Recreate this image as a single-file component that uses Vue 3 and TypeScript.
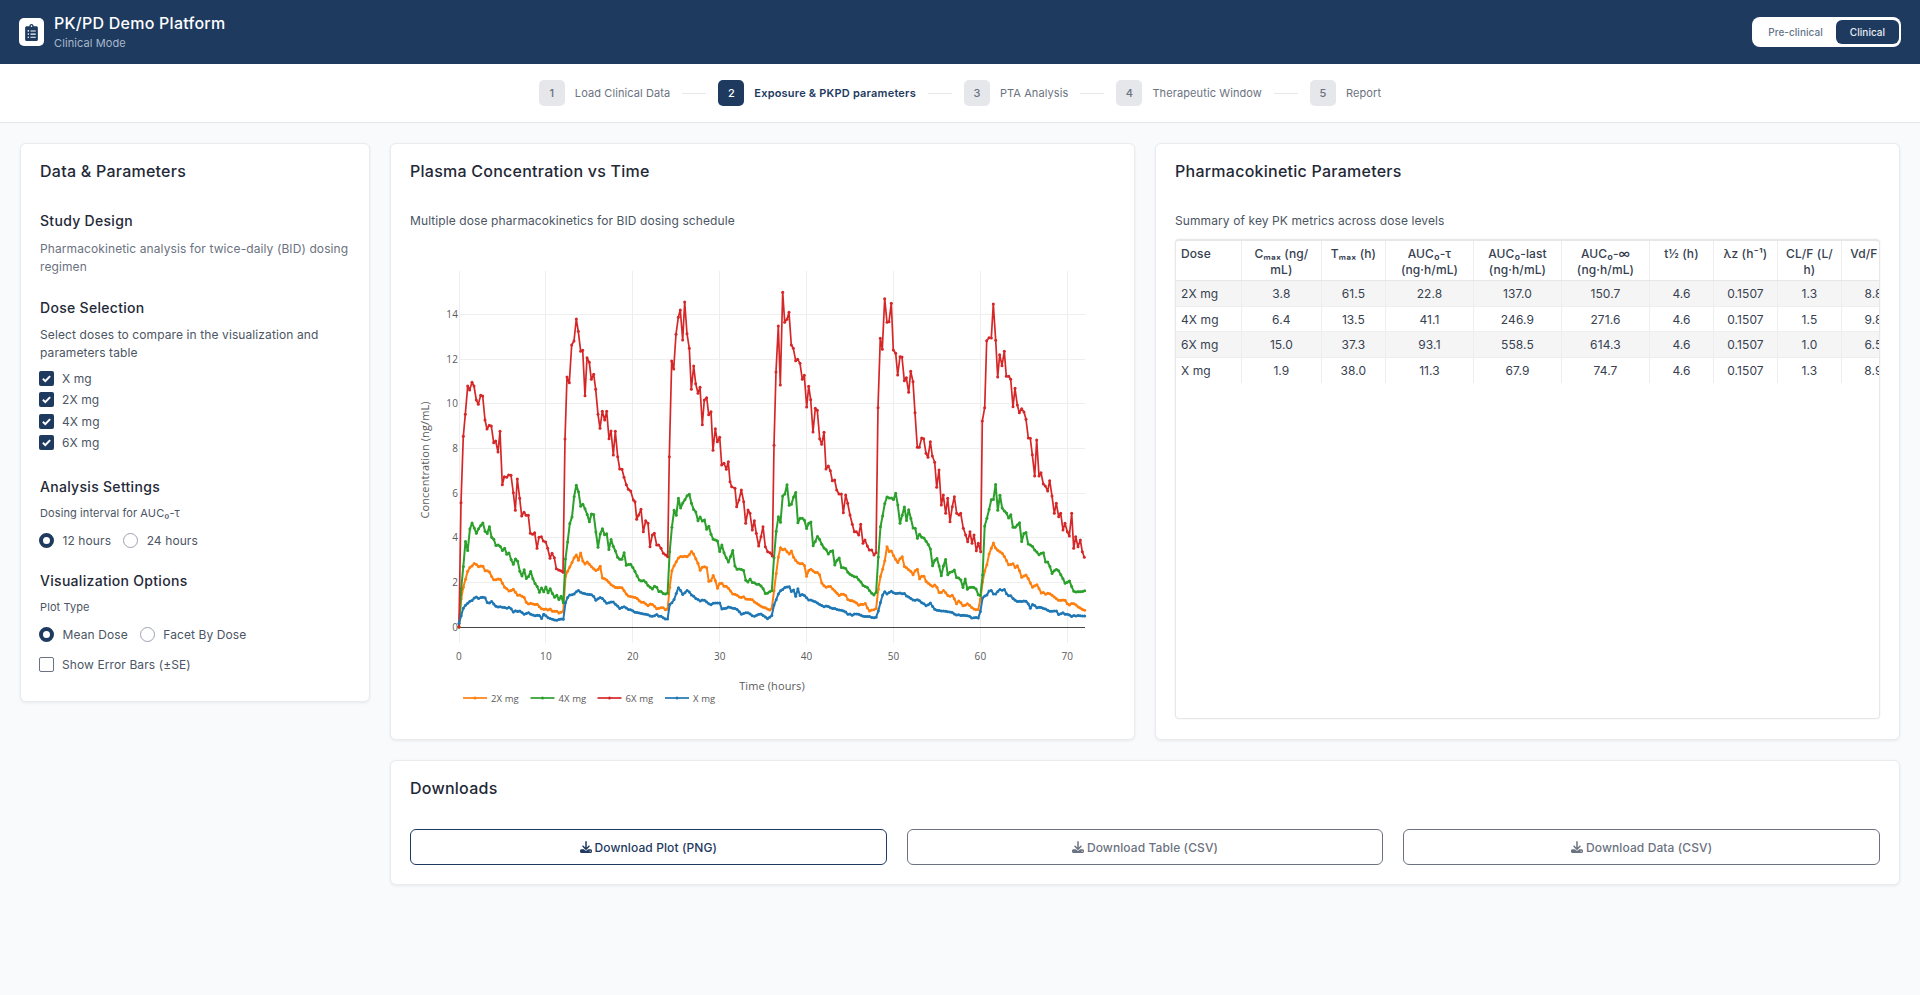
<script setup lang="ts">
type Seg = { ox: number; pts: number[] };
type Trace = { name: string; color: string; raw: boolean; amp: number; segs: Seg[] };

const X0 = 459;
const PX_H = 8.69;

const traces: Trace[] = [
  {
    name: "2X mg", color: "#ff7f0e", raw: false, amp: 0.9,
    segs: [
      { ox: 400, pts: [177,441,183,360,190,322,196,297,203,275,209,265,222,248,235,258,248,256,255,272,268,276,281,298,300,296,313,318,327,335,340,328,353,345,372,350,380,372,410,372,425,385,445,388,470,395,480,400,490,392,
        495,290,502,275,515,252,527,222,535,240,542,218,552,255,562,245,575,262,590,272,600,258,607,292,620,300,640,320,665,322,680,345,700,352,725,365,745,378,755,370,770,385,790,385,803,390,
        808,330,815,275,822,258,840,228,860,232,875,215,890,240,900,270,908,258,920,265,928,310,940,285,953,325,960,308,973,318,985,322,1000,345,1010,342,1020,355,1030,348,1040,362,1055,355,1065,370,1085,380,1105,390,1112,395] },
      { ox: 770, pts: [5,388,12,330,18,285,25,230,31,205,50,210,57,225,65,210,72,240,90,250,102,248,110,290,118,268,135,275,150,285,157,318,170,320,182,318,205,345,225,342,235,362,250,365,270,375,285,368,298,392,318,387,
        324,330,331,290,345,240,351,200,357,215,364,213,383,250,396,226,403,260,420,272,428,285,441,265,448,295,460,285,470,308,490,318,497,312,510,345,520,328,535,350,548,345,560,370,570,362,580,380,592,372,605,385,625,390,
        634,340,640,285,650,255,657,225,670,187,680,210,700,225,718,260,728,250,738,265,745,255,752,290,770,285,785,320,800,315,815,340,830,340,850,348,870,362,885,358,895,375,905,368,930,385,943,390] },
    ],
  },
  {
    name: "4X mg", color: "#2ca02c", raw: false, amp: 1.0,
    segs: [
      { ox: 400, pts: [177,441,183,330,190,262,196,183,203,213,209,152,216,130,222,143,229,163,235,150,242,140,249,127,255,152,262,158,268,140,275,170,281,178,288,198,295,198,301,197,308,215,314,205,321,222,327,220,334,240,340,252,347,238,353,242,360,275,366,285,373,268,380,300,386,290,392,275,399,298,405,310,412,320,418,335,425,325,432,337,438,322,445,340,451,325,458,340,464,355,471,345,477,360,484,350,490,370,
        495,250,502,197,508,132,515,122,521,58,528,12,534,22,541,82,548,72,554,85,561,100,568,125,574,105,581,100,587,155,594,200,600,165,607,143,614,165,620,162,627,208,633,180,640,197,652,232,660,235,667,240,673,215,680,262,687,250,694,258,700,262,707,280,720,305,733,298,745,315,758,325,765,318,778,335,790,340,803,340,
        808,232,815,148,822,88,829,105,835,55,842,82,849,70,855,58,868,42,875,70,882,92,888,95,895,128,901,108,908,125,914,118,920,150,927,135,934,170,940,180,953,185,960,220,967,190,973,225,985,248,998,210,1005,262,1018,268,1030,268,1040,310,1050,295,1058,310,1075,310,1090,325,1097,340,1110,335,1117,332] },
      { ox: 770, pts: [5,333,12,233,18,158,25,108,31,135,38,50,44,45,51,13,57,78,64,72,77,33,83,127,90,115,103,118,110,148,122,118,129,195,142,170,155,190,175,222,187,205,194,257,207,232,214,262,227,265,240,285,253,292,260,290,272,305,279,317,292,320,305,340,318,345,
        324,245,331,140,338,110,345,65,352,50,365,55,372,60,378,33,390,127,403,82,409,127,416,88,429,145,436,147,442,178,448,165,468,182,481,205,488,258,500,230,514,285,526,233,533,285,552,270,560,292,572,300,578,330,585,298,592,325,605,320,620,330,628,352,635,345,
        644,140,650,120,657,88,664,55,670,58,677,13,683,95,690,45,697,90,710,100,716,115,722,100,730,150,740,135,748,125,755,187,762,160,768,155,775,195,790,200,800,218,810,225,820,218,827,245,838,250,845,285,852,270,865,272,885,310,897,300,910,335,925,332,943,335] },
    ],
  },
  {
    name: "6X mg", color: "#d62728", raw: true, amp: 0,
    segs: [
      { ox: 400, pts: [177,441,183,68,190,-131,196,-197,203,-282,209,-270,216,-293,222,-282,229,-240,235,-227,242,-254,248,-252,255,-180,261,-153,268,-164,274,-162,281,-112,287,-117,294,-84,300,-146,307,14,313,-10,320,-8,326,-15,333,-14,340,38,346,91,352,-3,359,55,365,108,372,97,378,106,385,106,391,160,398,163,404,158,411,205,417,172,424,170,430,183,437,186,443,205,450,235,456,220,463,233,469,266,476,270,482,272,489,277,
        495,-123,501,-309,508,-292,515,-405,522,-417,529,-483,535,-446,542,-386,548,-389,555,-253,561,-367,568,-353,574,-302,581,-317,587,-272,594,-197,600,-155,607,-206,614,-180,620,-206,627,-124,633,-147,640,-75,646,-146,653,-70,659,-33,666,-32,672,-8,679,14,685,28,692,33,700,60,705,65,710,118,716,105,723,88,730,155,737,122,744,130,750,200,757,165,763,160,770,195,776,195,783,205,790,220,797,225,803,230,
        808,-70,815,-357,821,-333,828,-437,835,-488,841,-510,848,-420,854,-534,861,-439,868,-395,874,-272,881,-342,887,-289,894,-260,900,-278,907,-166,913,-240,920,-247,926,-196,933,-205,939,-89,946,-154,952,-115,959,-128,965,-45,972,-50,979,-32,985,-55,990,5,995,20,1005,25,1010,80,1017,60,1024,30,1031,65,1037,130,1044,90,1050,100,1057,150,1063,122,1069,160,1076,198,1083,170,1089,140,1096,200,1103,215,1110,218,1117,228] },
      { ox: 770, pts: [12,-104,18,-324,25,-462,31,-285,38,-563,44,-473,51,-482,57,-503,64,-405,70,-395,77,-358,83,-362,90,-350,97,-302,103,-314,110,-219,116,-281,122,-241,129,-144,136,-215,142,-209,149,-124,155,-107,162,-143,168,-33,175,-42,181,-28,187,2,194,0,200,30,207,42,214,42,220,98,227,45,233,70,240,105,247,133,253,155,259,155,266,165,272,133,279,190,285,180,292,198,298,210,305,210,312,225,318,218,
        324,-217,331,-425,337,-392,344,-544,351,-473,357,-475,364,-530,370,-390,377,-380,383,-315,390,-370,396,-369,403,-298,409,-307,416,-263,422,-326,429,-295,435,-202,442,-98,448,-98,455,-126,461,-124,468,-80,474,-68,481,-115,487,-72,494,-53,500,22,507,-30,514,75,520,45,527,100,533,55,540,125,547,80,553,50,560,100,567,105,572,100,580,145,587,165,593,185,600,155,606,190,612,165,619,212,625,190,632,215,
        637,-177,644,-217,650,-418,657,-427,664,-426,670,-528,677,-419,683,-309,689,-376,696,-343,703,-386,709,-311,716,-311,722,-302,729,-220,735,-275,742,-225,748,-202,755,-214,762,-204,768,-182,775,-126,781,-125,787,-76,794,-12,800,-120,807,-12,813,-22,820,12,826,18,833,33,839,2,846,48,853,100,859,70,866,110,872,100,879,150,885,130,892,155,898,168,905,100,911,205,917,170,924,200,931,180,937,215,943,232] },
    ],
  },
  {
    name: "X mg", color: "#1f77b4", raw: false, amp: 0.6,
    segs: [
      { ox: 400, pts: [177,430,183,410,190,385,203,370,215,362,228,350,235,355,255,352,265,375,272,362,290,380,310,382,320,385,330,382,340,395,360,392,372,402,385,398,400,408,415,405,425,415,432,402,445,415,465,420,490,418,
        495,370,507,345,520,345,535,330,548,340,568,345,578,342,588,360,598,352,610,358,622,370,640,365,660,385,672,382,690,390,710,398,730,400,755,410,770,405,803,418,
        808,375,820,365,835,322,850,345,860,328,880,350,900,362,915,360,930,375,945,368,960,368,966,388,985,382,1010,388,1025,402,1045,398,1060,408,1085,402,1100,415,1115,410] },
      { ox: 770, pts: [5,408,12,375,25,340,40,325,57,318,64,335,70,330,77,350,83,325,92,350,100,342,118,362,130,362,160,380,170,378,200,388,225,395,233,402,250,405,262,400,285,410,318,412,
        324,395,342,330,350,342,365,335,375,342,400,340,430,360,445,360,470,378,482,370,497,392,520,392,538,395,560,405,580,405,605,412,628,415,
        637,355,650,345,662,328,672,345,690,330,702,328,708,342,725,350,738,365,770,362,782,385,790,370,800,382,825,385,840,395,858,390,865,405,880,400,905,408,943,408] },
    ],
  },
];

function toPage(t: Trace): [number, number][] {
  const out: [number, number][] = [];
  for (const s of t.segs) {
    for (let i = 0; i < s.pts.length; i += 2) {
      out.push([s.ox + s.pts[i] / 3, 480 + s.pts[i + 1] / 3]);
    }
  }
  return out;
}

function sample(t: Trace): [number, number][] {
  const src = toPage(t);
  if (t.raw) return src;
  const out: [number, number][] = [];
  let seed = t.name.length * 97 + t.color.charCodeAt(2);
  let j = 0;
  for (let i = 0; i <= 288; i++) {
    const x = X0 + i * 0.25 * PX_H;
    while (j < src.length - 2 && src[j + 1][0] < x) j++;
    const [ax, ay] = src[j];
    const [bx, by] = src[j + 1];
    const f = Math.max(0, Math.min(1, (x - ax) / (bx - ax || 1)));
    seed = (seed * 9301 + 49297) % 233280;
    const n = (seed / 233280 - 0.5) * 2 * t.amp;
    out.push([x, ay + (by - ay) * f + (i === 0 ? 0 : n)]);
  }
  return out;
}

const series = traces.map((t) => {
  const p = sample(t);
  return {
    name: t.name,
    color: t.color,
    width: t.raw ? 1.7 : 2,
    dots: p,
    line: p.map(([x, y]) => `${x.toFixed(1)},${y.toFixed(1)}`).join(" "),
  };
});

const xTicks = [0, 10, 20, 30, 40, 50, 60, 70].map((v) => ({ v, x: X0 + v * PX_H }));
const yTicks = [2, 4, 6, 8, 10, 12, 14].map((v) => ({ v, y: 627 - v * 22.33 }));
const legend = [
  { name: "2X mg", color: "#ff7f0e", x1: 463, tx: 491 },
  { name: "4X mg", color: "#2ca02c", x1: 530.5, tx: 558.5 },
  { name: "6X mg", color: "#d62728", x1: 597.5, tx: 625.5 },
  { name: "X mg", color: "#1f77b4", x1: 665, tx: 693 },
];

const steps = [
  { n: 1, label: "Load Clinical Data" },
  { n: 2, label: "Exposure & PKPD parameters", active: true },
  { n: 3, label: "PTA Analysis" },
  { n: 4, label: "Therapeutic Window" },
  { n: 5, label: "Report" },
];

const doses = ["X mg", "2X mg", "4X mg", "6X mg"];

const headers = ["Dose", "Cₘₐₓ (ng/\nmL)", "Tₘₐₓ (h)", "AUC₀-τ\n(ng·h/mL)", "AUC₀-last\n(ng·h/mL)", "AUC₀-∞\n(ng·h/mL)", "t½ (h)", "λz (h⁻¹)", "CL/F (L/\nh)", "Vd/F (L)"];
const widths = [65.4, 80, 64, 88.2, 87.8, 88.2, 63.9, 64, 64, 64];
const rows = [
  ["2X mg", "3.8", "61.5", "22.8", "137.0", "150.7", "4.6", "0.1507", "1.3", "8.8"],
  ["4X mg", "6.4", "13.5", "41.1", "246.9", "271.6", "4.6", "0.1507", "1.5", "9.8"],
  ["6X mg", "15.0", "37.3", "93.1", "558.5", "614.3", "4.6", "0.1507", "1.0", "6.5"],
  ["X mg", "1.9", "38.0", "11.3", "67.9", "74.7", "4.6", "0.1507", "1.3", "8.9"],
];

const downloads = [
  { label: "Download Plot (PNG)", primary: true },
  { label: "Download Table (CSV)", primary: false },
  { label: "Download Data (CSV)", primary: false },
];
const dlPath = "M288 32c0-17.7-14.3-32-32-32s-32 14.3-32 32V274.7l-73.4-73.4c-12.5-12.5-32.8-12.5-45.3 0s-12.5 32.8 0 45.3l128 128c12.5 12.5 32.8 12.5 45.3 0l128-128c12.5-12.5 12.5-32.8 0-45.3s-32.8-12.5-45.3 0L288 274.7V32zM64 352c-35.3 0-64 28.7-64 64v32c0 35.3 28.7 64 64 64H448c35.3 0 64-28.7 64-64V416c0-35.3-28.7-64-64-64H346.5l-45.3 45.3c-25 25-65.5 25-90.5 0L165.5 352H64zm368 56a24 24 0 1 1 0 48 24 24 0 1 1 0-48z";
</script>

<template>
  <div class="page">
    <header class="topbar">
      <div class="brand">
        <div class="logo">
          <svg viewBox="0 0 384 512" width="13" height="17" fill="#1e3a5f">
            <path d="M336 64h-80c0-35.3-28.7-64-64-64s-64 28.7-64 64H48C21.5 64 0 85.5 0 112v352c0 26.5 21.5 48 48 48h288c26.5 0 48-21.5 48-48V112c0-26.5-21.5-48-48-48zM96 424c-13.3 0-24-10.7-24-24s10.7-24 24-24 24 10.7 24 24-10.7 24-24 24zm0-96c-13.3 0-24-10.7-24-24s10.7-24 24-24 24 10.7 24 24-10.7 24-24 24zm0-96c-13.3 0-24-10.7-24-24s10.7-24 24-24 24 10.7 24 24-10.7 24-24 24zm96-192c13.3 0 24 10.7 24 24s-10.7 24-24 24-24-10.7-24-24 10.7-24 24-24zm128 368c0 4.4-3.6 8-8 8H168c-4.4 0-8-3.6-8-8v-16c0-4.4 3.6-8 8-8h144c4.4 0 8 3.6 8 8v16zm0-96c0 4.4-3.6 8-8 8H168c-4.4 0-8-3.6-8-8v-16c0-4.4 3.6-8 8-8h144c4.4 0 8 3.6 8 8v16zm0-96c0 4.4-3.6 8-8 8H168c-4.4 0-8-3.6-8-8v-16c0-4.4 3.6-8 8-8h144c4.4 0 8 3.6 8 8v16z" />
          </svg>
        </div>
        <div>
          <div class="brand-title">PK/PD Demo Platform</div>
          <div class="brand-sub">Clinical Mode</div>
        </div>
      </div>
      <div class="mode">
        <span class="mode-opt">Pre-clinical</span>
        <span class="mode-opt on">Clinical</span>
      </div>
    </header>

    <nav class="stepper">
      <template v-for="(s, i) in steps" :key="s.n">
        <span v-if="i > 0" class="conn"></span>
        <span class="step" :class="{ active: s.active }">
          <span class="num">{{ s.n }}</span>
          <span class="lbl">{{ s.label }}</span>
        </span>
      </template>
    </nav>

    <main class="layout">
      <aside class="card side">
        <h2>Data &amp; Parameters</h2>
        <h3 class="h-study">Study Design</h3>
        <p class="muted">Pharmacokinetic analysis for twice-daily (BID) dosing regimen</p>
        <h3 class="h-dose">Dose Selection</h3>
        <p class="body tight">Select doses to compare in the visualization and parameters table</p>
        <div class="checks">
          <label v-for="d in doses" :key="d" class="check-row">
            <span class="box on">
              <svg viewBox="0 0 15 15" width="15" height="15"><path d="M3.9 7.8l2.4 2.3 4.8-5" fill="none" stroke="#fff" stroke-width="2" /></svg>
            </span>
            {{ d }}
          </label>
        </div>
        <h3 class="h-analysis">Analysis Settings</h3>
        <div class="small">Dosing interval for AUC₀-τ</div>
        <div class="radios">
          <span class="radio-item"><span class="radio on"></span>12 hours</span>
          <span class="radio-item"><span class="radio"></span>24 hours</span>
        </div>
        <h3 class="h-viz">Visualization Options</h3>
        <div class="small">Plot Type</div>
        <div class="radios">
          <span class="radio-item"><span class="radio on"></span>Mean Dose</span>
          <span class="radio-item"><span class="radio"></span>Facet By Dose</span>
        </div>
        <label class="check-row err"><span class="box"></span>Show Error Bars (±SE)</label>
      </aside>

      <div class="content">
        <div class="two">
          <section class="card panel">
            <h2>Plasma Concentration vs Time</h2>
            <p class="body sub">Multiple dose pharmacokinetics for BID dosing schedule</p>
            <svg class="chart" viewBox="411 240 704 480" width="704" height="480">
              <g stroke="#eeeeee" stroke-width="1" shape-rendering="crispEdges">
                <line v-for="t in xTicks" :key="t.v" :x1="t.x" :x2="t.x" y1="270.5" y2="643" />
                <line v-for="t in yTicks" :key="t.v" x1="459" x2="1085" :y1="t.y" :y2="t.y" />
              </g>
              <line x1="459" x2="1085" y1="627.5" y2="627.5" stroke="#444" stroke-width="1" shape-rendering="crispEdges" />
              <g v-for="s in series" :key="s.name">
                <polyline :points="s.line" fill="none" :stroke="s.color" :stroke-width="s.width" stroke-linejoin="round" />
                <circle v-for="(d, i) in s.dots" :key="i" :cx="d[0]" :cy="d[1]" r="1.5" :fill="s.color" />
              </g>
              <g class="tick">
                <text v-for="t in xTicks" :key="t.v" :x="t.x" y="660" text-anchor="middle">{{ t.v }}</text>
                <text v-for="t in yTicks" :key="t.v" x="458" :y="t.y + 3.5" text-anchor="end">{{ t.v }}</text>
                <text x="458" y="630.5" text-anchor="end">0</text>
              </g>
              <text class="axis" x="772" y="690" text-anchor="middle">Time (hours)</text>
              <text class="axis" transform="translate(429 460) rotate(-90)" text-anchor="middle">Concentration (ng/mL)</text>
              <g v-for="l in legend" :key="l.name">
                <line :x1="l.x1" :x2="l.x1 + 24" y1="698" y2="698" :stroke="l.color" stroke-width="1.7" />
                <circle :cx="l.x1 + 12" cy="698" r="1.5" :fill="l.color" />
                <text class="leg" :x="l.tx" y="701.5">{{ l.name }}</text>
              </g>
            </svg>
          </section>

          <section class="card panel">
            <h2>Pharmacokinetic Parameters</h2>
            <p class="body sub">Summary of key PK metrics across dose levels</p>
            <div class="table-wrap">
              <table>
                <colgroup>
                  <col v-for="(w, i) in widths" :key="i" :style="{ width: w + 'px' }" />
                </colgroup>
                <thead>
                  <tr>
                    <th v-for="(h, i) in headers" :key="i" :class="{ first: i === 0 }">{{ h }}</th>
                  </tr>
                </thead>
                <tbody>
                  <tr v-for="r in rows" :key="r[0]">
                    <td v-for="(c, i) in r" :key="i" :class="{ first: i === 0 }">{{ c }}</td>
                  </tr>
                </tbody>
              </table>
            </div>
          </section>
        </div>

        <section class="card downloads">
          <h2>Downloads</h2>
          <div class="dl-row">
            <button v-for="d in downloads" :key="d.label" class="dl" :class="{ primary: d.primary }">
              <svg viewBox="0 0 512 512" width="12" height="12" fill="currentColor"><path :d="dlPath" /></svg>
              {{ d.label }}
            </button>
          </div>
        </section>
      </div>
    </main>
  </div>
</template>

<style>
html, body { margin: 0; background: #f8fafc; }
</style>

<style scoped>
.page {
  min-height: 995px;
  background: #f8fafc;
  font-family: Inter, "Liberation Sans", sans-serif;
  color: #1f2937;
  letter-spacing: 0.1px;
  overflow: hidden;
}
.topbar {
  height: 64px;
  background: #1e3a5f;
  display: flex;
  align-items: center;
  justify-content: space-between;
  padding: 0 19px;
}
.brand { display: flex; align-items: center; gap: 10px; }
.logo {
  width: 25px;
  height: 28px;
  background: #fff;
  border-radius: 5px;
  display: flex;
  align-items: center;
  justify-content: center;
}
.brand-title { color: #fff; font-size: 16px; font-weight: 500; line-height: 20px; letter-spacing: 0.25px; margin-top: -1px; }
.brand-sub { color: #a9b8cb; font-size: 11px; line-height: 14px; margin-top: 3px; }
.mode {
  width: 149px;
  height: 30px;
  box-sizing: border-box;
  background: #fff;
  border-radius: 8px;
  padding: 3px 2px 3px 3px;
  display: flex;
  align-items: center;
  justify-content: space-between;
  font-size: 10px;
  font-weight: 500;
  letter-spacing: 0.05px;
}
.mode-opt { color: #64748b; flex: 1; text-align: center; }
.mode-opt.on {
  flex: none;
  width: 63px;
  height: 24px;
  line-height: 24px;
  background: #1e3a5f;
  color: #e8edf3;
  border-radius: 6px;
}
.stepper {
  height: 59px;
  box-sizing: border-box;
  background: #fff;
  border-bottom: 1px solid #e5e7eb;
  display: flex;
  align-items: center;
  justify-content: center;
  gap: 12px;
  margin-bottom: 20px;
}
.conn { width: 24px; height: 1px; background: #e5e7eb; }
.step { display: flex; align-items: center; gap: 10px; font-size: 11px; letter-spacing: 0.1px; color: #6b7280; }
.num {
  width: 26px;
  height: 26px;
  border-radius: 5px;
  background: #e5e7eb;
  display: flex;
  align-items: center;
  justify-content: center;
  font-weight: 500;
}
.step.active .num { background: #1e3a5f; color: #fff; }
.step.active .lbl { color: #1e3a5f; font-weight: 600; letter-spacing: 0.2px; }
.layout {
  display: grid;
  grid-template-columns: 350px 1510px;
  gap: 20px;
  padding: 0 20px;
  align-items: start;
}
.card {
  background: #fff;
  border: 1px solid #e9ecef;
  border-radius: 6px;
  box-shadow: 0 1px 3px rgba(0, 0, 0, 0.07);
  box-sizing: border-box;
}
h2 { margin: 0; font-size: 16px; font-weight: 500; line-height: 18px; letter-spacing: 0.25px; color: #1f2937; }
h3 { margin: 0; font-size: 14px; font-weight: 500; line-height: 18px; letter-spacing: 0.3px; color: #1f2937; }
p { margin: 0; }
.side { padding: 18px 19px 29px; height: 559px; }
.h-study { margin-top: 32px; }
.muted { margin-top: 10px; font-size: 12px; line-height: 18px; color: #6b7280; }
.h-dose { margin-top: 23px; }
.body { margin-top: 10px; font-size: 12px; line-height: 18px; color: #4b5563; }
.body.tight { margin-top: 9px; }
.checks { margin-top: 6px; margin-left: -1px; }
.check-row {
  display: flex;
  align-items: center;
  gap: 8px;
  height: 21.3px;
  font-size: 12px;
  color: #4b5563;
}
.box {
  width: 15px;
  height: 15px;
  box-sizing: border-box;
  border: 1px solid #6b7280;
  border-radius: 2px;
  background: #fff;
  display: inline-flex;
  flex: none;
}
.box.on { background: #1e3a5f; border: 0; }
.h-analysis { margin-top: 24.6px; }
.small { margin-top: 9px; font-size: 11px; line-height: 16px; color: #4b5563; }
.radios { margin-top: 11.5px; margin-left: -1px; display: flex; gap: 12px; height: 16px; font-size: 12px; color: #4b5563; }
.radio-item { display: flex; align-items: center; gap: 8.5px; }
.radio {
  width: 15px;
  height: 15px;
  box-sizing: border-box;
  border: 1px solid #9ca3af;
  border-radius: 50%;
  background: #fff;
}
.radio.on { border: 4.5px solid #1e3a5f; }
.h-viz { margin-top: 24px; }
.err { margin-top: 11.5px; margin-left: -1px; }
.content { display: flex; flex-direction: column; gap: 20px; }
.two { display: grid; grid-template-columns: 745px 745px; gap: 20px; }
.panel { padding: 18px 19px; height: 597px; }
.sub { margin-top: 32px; line-height: 18px; }
.chart { display: block; margin-top: 10px; margin-left: 1px; }
.tick text { font-family: "Open Sans", sans-serif; font-size: 10px; fill: #5a5a5a; }
.axis { font-family: "Open Sans", sans-serif; font-size: 11px; fill: #5a5a5a; }
.leg { font-family: "Open Sans", sans-serif; font-size: 9.5px; fill: #5a5a5a; }
.table-wrap {
  margin-top: 9px;
  height: 480px;
  box-sizing: border-box;
  border: 1px solid #e5e7eb;
  border-top: 2px solid #e5e7eb;
  border-radius: 4px;
  overflow: hidden;
  box-shadow: 0 0 2px rgba(0, 0, 0, 0.08);
}
table { border-collapse: collapse; table-layout: fixed; width: 729.5px; font-size: 12px; color: #374151; }
th {
  font-weight: 500;
  font-size: 12px;
  line-height: 16px;
  padding: 5px 5px 2px;
  height: 39px;
  box-sizing: border-box;
  text-align: center;
  vertical-align: top;
  white-space: pre-line;
  color: #374151;
  border-right: 1px solid #eee;
  border-bottom: 1px solid #e5e7eb;
}
td {
  height: 25.5px;
  box-sizing: border-box;
  padding: 1px 5px 0;
  text-align: center;
  border-right: 1px solid #eee;
  border-bottom: 1px solid #eee;
  white-space: nowrap;
}
.first { text-align: left; }
tbody tr:nth-child(odd) { background: #f5f5f5; }
tbody tr:last-child td { border-bottom: 0; }
.downloads { height: 125px; padding: 18px 19px; }
.dl-row { display: grid; grid-template-columns: repeat(3, 1fr); gap: 20px; margin-top: 32px; }
.dl {
  height: 36px;
  background: #fff;
  border: 1px solid #6b7280;
  border-radius: 6px;
  color: #6b7280;
  font-family: inherit;
  font-size: 12px;
  font-weight: 500;
  letter-spacing: 0.1px;
  display: flex;
  align-items: center;
  justify-content: center;
  gap: 3px;
  padding: 0;
}
.dl.primary { border-color: #1e3a5f; color: #1e3a5f; }
</style>
